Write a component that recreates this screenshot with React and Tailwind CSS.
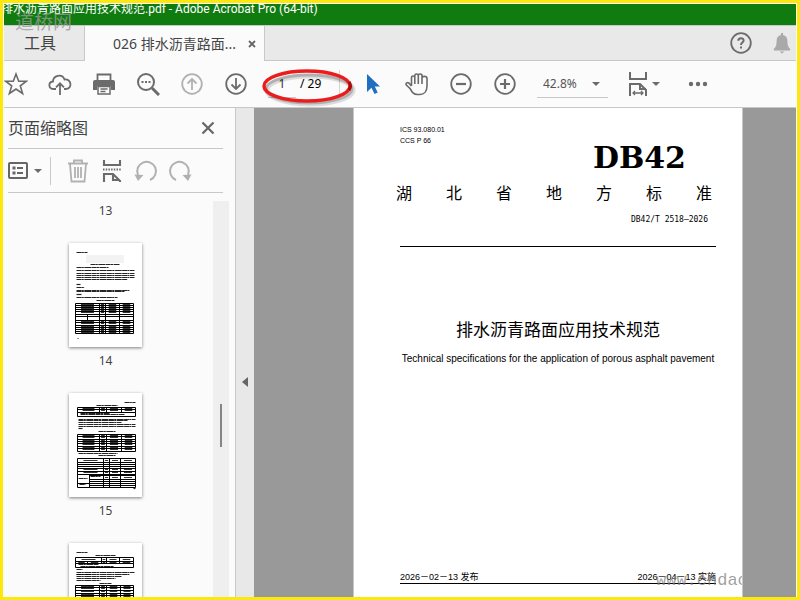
import { useState } from "react";

const sans = "font-['Noto_Sans','Noto_Sans_CJK_SC',sans-serif]";

// Small line drawings of the document pages, in page units of 73 x 104
const thumbs = [
  {
    page: 14,
    stamp: true,
    lines: [
      [7, 18, 9], [21, 50, 21], [7, 39, 24], [7, 65, 27], [7, 65, 30], [7, 65, 32],
      [7, 65, 34], [7, 58, 36], [7, 11, 41], [7, 15, 44], [7, 60, 47], [7, 55, 48],
      [7, 12, 51], [7, 48, 54], [27, 45, 57], [8, 9, 95],
    ],
    tables: [
      { x: 6, w: 58, rows: [60, 62, 64, 66, 68, 71], cols: [30, 36, 50] },
      { x: 6, w: 58, rows: [71, 73, 77], cols: [18, 30, 36, 50], plain: true },
      { x: 6, w: 58, rows: [77, 79, 82, 84, 86, 88, 90], cols: [30, 36, 50] },
    ],
  },
  {
    page: 15,
    lines: [
      [55, 66, 9], [27, 48, 12], [11, 40, 20], [11, 55, 21], [9, 66, 26], [9, 58, 27], [9, 52, 29],
      [9, 66, 31], [9, 66, 33], [9, 13, 35], [29, 46, 38], [9, 48, 60], [29, 46, 62], [9, 18, 85],
      [10, 16, 91], [21, 31, 83], [64, 66, 95],
    ],
    tables: [
      { x: 8, w: 58, rows: [14, 16, 19], cols: [30, 37, 52] },
      { x: 8, w: 58, rows: [19, 23], cols: [], plain: true },
      { x: 8, w: 58, rows: [41, 43, 46, 48, 50, 53, 55, 58], cols: [30, 37, 52] },
      { x: 8, w: 58, rows: [65, 69], cols: [34, 40, 51] },
      { x: 8, w: 58, rows: [69, 71, 73, 75], cols: [34, 40, 51], plain: true },
      { x: 8, w: 58, rows: [75, 78, 81], cols: [34, 40, 51] },
      { x: 8, w: 12, rows: [81, 90, 94], cols: [], plain: true },
      { x: 20, w: 46, rows: [81, 82], cols: [34, 40, 51], plain: true },
      { x: 34, w: 32, rows: [82, 86], cols: [40, 51] },
      { x: 20, w: 46, rows: [86, 88, 90, 92, 94], cols: [34, 40, 51], plain: true },
    ],
  },
  {
    page: 16,
    lines: [
      [7, 18, 9], [26, 46, 12], [9, 29, 21], [11, 44, 23], [7, 13, 26], [7, 65, 29],
      [7, 22, 31], [7, 60, 31], [7, 52, 33], [7, 46, 35], [7, 31, 37], [30, 42, 40],
    ],
    tables: [
      { x: 6, w: 58, rows: [14, 18], cols: [32, 37, 50] },
      { x: 6, w: 58, rows: [18, 20], cols: [18, 32, 37, 50] },
      { x: 6, w: 58, rows: [20, 24], cols: [], plain: true },
      { x: 6, w: 58, rows: [42, 44, 47, 50, 52, 54, 57, 60], cols: [30, 37, 51] },
      { x: 6, w: 58, rows: [66, 69, 72, 75, 78], cols: [30, 37, 51] },
    ],
  },
];

function TableDrawing({ x, w, rows, cols, plain }) {
  const top = rows[0];
  const bottom = rows[rows.length - 1];
  const edges = [x, ...cols, x + w];

  return (
    <g stroke="#000">
      {rows.map((y) => (
        <line key={y} x1={x} x2={x + w} y1={y} y2={y} />
      ))}
      {edges.map((c) => (
        <line key={c} x1={c} x2={c} y1={top} y2={bottom} />
      ))}
      {!plain &&
        rows.slice(1).map((y, r) =>
          edges.slice(1).map((e, i) => {
            const mid = (edges[i] + e) / 2;
            const half = (e - edges[i]) * 0.27;
            const cy = Math.floor((y + rows[r]) / 2);
            return (
              <line key={`${y}-${e}`} x1={mid - half} x2={mid + half} y1={cy} y2={cy} strokeOpacity="0.8" />
            );
          })
        )}
    </g>
  );
}

function Thumbnail({ page, stamp, lines, tables }) {
  return (
    <button className="flex flex-col items-center gap-1" aria-label={`Page ${page}`}>
      <svg viewBox="0 0 73 104" className="w-[73px] h-[104px] bg-white shadow-[0_1px_3px_rgba(0,0,0,0.5)]">
        {stamp && <rect x="17" y="12" width="38" height="8" fill="#f3f3f3" />}
        <g transform="translate(0.5 0.5)">
          {lines.map(([x1, x2, y], i) => (
            <line key={i} x1={x1} x2={x2} y1={y} y2={y} stroke="#000" strokeOpacity="0.85" strokeWidth="1.2" strokeDasharray="5 0.3 2 0.5 7 0.4" />
          ))}
          {tables.map((t, i) => (
            <TableDrawing key={i} {...t} />
          ))}
        </g>
      </svg>
      <span className="text-xs leading-5 text-[#444]">{page}</span>
    </button>
  );
}

function Icon({ label, children, className = "text-[#6b6b6b]" }) {
  return (
    <button aria-label={label} className={`shrink-0 ${className}`}>
      <svg viewBox="0 0 24 24" className="w-6 h-6" fill="none" stroke="currentColor" strokeWidth="1.8">
        {children}
      </svg>
    </button>
  );
}

function Caret() {
  return (
    <svg viewBox="0 0 8 4" className="w-2 h-1 shrink-0" fill="#6b6b6b">
      <path d="M0 0h8L4 4z" />
    </svg>
  );
}

function TabBar() {
  return (
    <nav className="flex h-9 shrink-0 bg-[#e9e9e9] text-[#444]">
      <button className="w-[81px] pr-2 border-r border-b border-t border-[#c8c8c8] text-base leading-8">工具</button>
      <div className="w-[180px] pl-7 flex items-center gap-3 bg-[#fbfbfb] border-r border-t border-[#c8c8c8]">
        <button className="text-sm whitespace-nowrap">026 排水沥青路面...</button>
        <button aria-label="Close tab">
          <svg viewBox="0 0 8 8" className="w-2 h-2" stroke="#666" strokeWidth="1.8">
            <path d="M1 1l6 6M7 1l-6 6" />
          </svg>
        </button>
      </div>
      <div className="flex-1 flex items-center justify-end gap-5 pr-[5px] border-b border-t border-[#c8c8c8]">
        <Icon label="Help">
          <circle cx="12" cy="12" r="9.8" />
          <path d="M9.3 9.8c0-3.6 5.5-3.4 5.3-.2-.1 2-2.6 1.900-2.600 4.300M12 15.400v2.200" strokeWidth="2" />
        </Icon>
        <button aria-label="Notifications" className="text-[#a9a9a9]">
          <svg viewBox="0 0 18 22" className="w-[18px] h-[22px]" fill="currentColor">
            <path d="M8 1h2v2c3 .6 4.400 2.800 4.400 6 0 4 .6 6 2.800 8v1.500H.8V17c2.200-2 2.800-4 2.800-8 0-3.200 1.400-5.400 4.400-6zM6.500 19.500h5L9 21.500z" />
          </svg>
        </button>
      </div>
    </nav>
  );
}

function Toolbar() {
  const [page, setPage] = useState("1");

  return (
    <div className="flex items-center h-[47px] shrink-0 bg-[#fbfbfb] border-b border-[#c8c8c8]">
      <div className="flex gap-5">
        <Icon label="Star">
          <path d="M12 2l2.7 7.2h7.7l-6.100 4.700 2.300 7.600L12 17l-6.600 4.500 2.300-7.600L1.600 9.200h7.700z" strokeWidth="1.6" />
        </Icon>
        <Icon label="Upload">
          <path d="M8 17H6c-6 0-6-7-1-7.500C5 3.500 14 1 16.500 7.500c7-1 8.500 9.500 1 9.500H16" />
          <path d="M12 23V11.500M8 15.300l4-4 4 4" />
        </Icon>
        <Icon label="Print">
          <path d="M5.500 8V2.500h13V8" />
          <path d="M3 8h18q2 0 2 2v8h-4v-4H5v4H1v-8q0-2 2-2z" fill="currentColor" stroke="none" />
          <path d="M6 14.500h12V22H6zM8.500 17h7M8.500 19.500h5" strokeWidth="1.5" />
        </Icon>
        <Icon label="Search">
          <circle cx="10" cy="10" r="8" strokeWidth="2" />
          <path d="M16 16l7 7" strokeWidth="3" />
          <path d="M5.500 10h2M9 10h2M12.500 10h2" strokeWidth="2" />
        </Icon>
        <Icon label="Previous page" className="text-[#b1b1b1]">
          <circle cx="12" cy="12" r="9.8" />
          <path d="M12 18V7M7.500 11.500L12 7l4.500 4.500" />
        </Icon>
        <Icon label="Next page">
          <circle cx="12" cy="12" r="9.8" />
          <path d="M12 6v11M7.500 12.500L12 17l4.500-4.500" />
        </Icon>
      </div>

      {/* Page number */}
      <div className="relative flex items-center ml-5 h-7 w-[72px] border-r border-[#d4d4d4] text-xs text-[#333]">
        <input
          aria-label="Page number"
          value={page}
          onChange={(e) => setPage(e.target.value)}
          className="w-7 h-7 border-b border-[#c8c8c8] text-center outline-none"
        />
        <span className="pl-1 text-black">/ 29</span>
        <svg viewBox="0 0 96 40" className="absolute -left-1.5 -top-0.5 w-24 h-10 max-w-none pointer-events-none" fill="none">
          <ellipse cx="48" cy="22" rx="43" ry="14" stroke="#000" strokeOpacity="0.12" strokeWidth="5" />
          <ellipse cx="47" cy="21" rx="43" ry="14" stroke="#000" strokeOpacity="0.2" strokeWidth="3" />
          <ellipse cx="45" cy="18" rx="43" ry="15" stroke="#ed1c1c" strokeWidth="3.5" />
          <path d="M87 14q3 4 0 8" stroke="#a80c0c" strokeWidth="3" />
        </svg>
      </div>

      <div className="flex gap-5 ml-[21px]">
        <Icon label="Select" className="text-[#1f6fc0]">
          <path d="M6 2v18l4.500-4.200 3 6.200 3.200-1.500-2.900-6H19z" fill="currentColor" stroke="none" />
        </Icon>
        <Icon label="Hand">
          <path
            d="M6.500 14V5.500c0-2 3.300-2 3.300 0V3.500c0-2 3.500-2 3.500 0 0-2 3.700-2 3.700 0V6c0-2 5-2.500 5 .5V14c0 5.500-3 8.500-7 8.500h-2.500c-4 0-5.500-2.500-7.500-6L1.300 13c-1-2 1.200-3 2.700-1.800L6.500 14M9.800 5v7M13.300 3.500V12M17 5.500V12"
            strokeWidth="1.6"
          />
        </Icon>
        <Icon label="Zoom out">
          <circle cx="12" cy="12" r="9.8" />
          <path d="M7 12h10" strokeWidth="2.2" />
        </Icon>
        <Icon label="Zoom in">
          <circle cx="12" cy="12" r="9.8" />
          <path d="M7 12h10M12 7v10" strokeWidth="2.2" />
        </Icon>
      </div>

      {/* Zoom level */}
      <div className="flex items-center ml-5 h-7 w-[71px] pl-1.5 pr-2 border-b border-[#c8c8c8]">
        <select aria-label="Zoom level" className="appearance-none flex-1 min-w-0 text-xs text-[#555] outline-none">
          <option>42.8%</option>
          <option>100%</option>
        </select>
        <Caret />
      </div>

      <button aria-label="Fit page" className="flex items-center gap-1 ml-5">
        <svg viewBox="0 0 20 26" className="w-5 h-[26px]" fill="none" stroke="#6b6b6b" strokeWidth="2">
          <path d="M2 1v7h16V1M2 25V13h10l6 6v6M12 13v5h6" />
          <path d="M5 22h10M7 20l-2 2 2 2M13 20l2 2-2 2" strokeWidth="1.3" />
        </svg>
        <Caret />
      </button>
      <Icon label="More tools" className="ml-[26px] text-[#6b6b6b]">
        <g fill="currentColor" stroke="none">
          <circle cx="5" cy="12" r="2.2" />
          <circle cx="12" cy="12" r="2.2" />
          <circle cx="19" cy="12" r="2.2" />
        </g>
      </Icon>
    </div>
  );
}

function Sidebar() {
  return (
    <aside className="w-[232px] shrink-0 flex flex-col pl-1 bg-[#fbfbfb] border-r border-[#c8c8c8]">
      <div className="flex items-center justify-between mr-3 h-[41px] pr-2 shrink-0 border-b border-[#c8c8c8]">
        <h2 className="text-base text-[#444]">页面缩略图</h2>
        <button aria-label="Close panel">
          <svg viewBox="0 0 14 14" className="w-[14px] h-[14px]" stroke="#666" strokeWidth="2.2">
            <path d="M1.500 1.500l11 11M12.500 1.500l-11 11" />
          </svg>
        </button>
      </div>

      <div className="flex items-center mr-3 h-11 shrink-0 border-b border-[#c8c8c8]">
        <button aria-label="Options" className="flex items-center gap-1.5 pr-2 h-7 border-r border-[#c8c8c8]">
          <svg viewBox="0 0 20 17" className="w-5 h-[17px]" fill="none" stroke="#666" strokeWidth="2">
            <rect x="1" y="1" width="18" height="15" rx="1" />
            <path d="M9 6h6M9 11h6" />
            <path d="M4.500 6h3M4.500 11h3" strokeWidth="3" />
          </svg>
          <Caret />
        </button>
        <div className="flex items-center gap-2.5 ml-[15px]">
          <Icon label="Delete" className="text-[#b1b1b1]">
            <path d="M2 4.500h20M8 4V1.500h8V4M4 5l1.500 17.500h13L20 5M9 8v11M12 8v11M15 8v11" />
          </Icon>
          <Icon label="Split pages">
            <path d="M4 1v5h16V1M4 23v-8h9l7 7v1M13 15v6h6" strokeWidth="2.1" />
            <path d="M3 10.500h18" strokeDasharray="1.5 1.2" />
          </Icon>
          <Icon label="Rotate left" className="text-[#b1b1b1]">
            <path d="M16 21A9.400 9.400 0 1 0 4 16" strokeWidth="2" />
            <path d="M.5 15.500l9 .5-5.500 6z" fill="currentColor" stroke="none" />
          </Icon>
          <Icon label="Rotate right" className="text-[#b1b1b1]">
            <path d="M8 21A9.400 9.400 0 1 1 20 16" strokeWidth="2" />
            <path d="M23.500 15.500l-9 .5 5.500 6z" fill="currentColor" stroke="none" />
          </Icon>
        </div>
      </div>

      <div className="flex flex-1 min-h-0 pt-2 pr-1.5">
        <div className="flex-1 flex flex-col items-center gap-[22px] pr-2.5 overflow-hidden">
          <span className="text-xs leading-5 text-[#444]">13</span>
          {thumbs.map((t) => (
            <Thumbnail key={t.page} {...t} />
          ))}
        </div>
        <div className="w-4 shrink-0 pt-[203px] pl-[7px] bg-[#efefef]">
          <div className="w-0.5 h-[43px] bg-[#858585]" />
        </div>
      </div>
    </aside>
  );
}

function DocumentPage() {
  return (
    <article className="relative w-[390px] ml-[99px] shrink-0 flex flex-col pl-[46px] pr-[26px] bg-white border-l border-r border-[#c8c8c8] text-black overflow-hidden">
      <p className="mt-4 font-['Liberation_Sans',sans-serif] text-[7px] leading-[11px]">
        ICS 93.080.01
        <br />
        CCS P 66
      </p>
      <div className="self-end mr-[30px] font-['DejaVu_Serif',serif] font-bold text-[30px] leading-6">DB42</div>
      <div className="flex justify-between -ml-1 mr-1 mt-2.5 text-base leading-6 font-['Noto_Sans_CJK_SC',sans-serif]">
        {["湖", "北", "省", "地", "方", "标", "准"].map((c) => (
          <span key={c}>{c}</span>
        ))}
      </div>
      <p className="self-end mr-2 mt-2.5 font-['DejaVu_Sans_Mono',monospace] text-[8px] leading-3">DB42/T 2518—2026</p>
      <hr className="mt-5 border-black" />
      <h1 className="mt-[70px] text-center text-[17px] leading-6 font-['Noto_Sans_CJK_SC',sans-serif]">排水沥青路面应用技术规范</h1>
      <p className="mt-3 text-center whitespace-nowrap font-['Liberation_Sans',sans-serif] text-[10px] leading-3">
        Technical specifications for the application of porous asphalt pavement
      </p>
      <footer className="mt-auto mb-[13px] flex justify-between border-b border-black text-[9px] leading-3 font-['Liberation_Sans','Noto_Sans_CJK_SC',sans-serif]">
        <span>2026－02－13 发布</span>
        <span>2026－04－13 实施</span>
      </footer>
      <span className="absolute left-[302px] bottom-1 font-['Liberation_Mono',monospace] text-[17px] leading-6 text-[#777]/70">
        www.cndao
      </span>
    </article>
  );
}

export default function App() {
  return (
    <div className={`relative h-screen flex flex-col overflow-hidden border-[3px] border-[#fde80c] bg-white ${sans}`}>
      <div className="flex flex-col flex-1 min-h-0 mt-px mx-px">
        <header className="h-[21px] shrink-0 bg-[#107c10] text-white text-xs leading-[10px] -indent-[3px] whitespace-nowrap overflow-hidden font-['Roboto','Noto_Sans_CJK_SC',sans-serif]">
          排水沥青路面应用技术规范.pdf - Adobe Acrobat Pro (64-bit)
        </header>
        <TabBar />
        <Toolbar />
        <div className="flex flex-1 min-h-0">
          <Sidebar />
          <button aria-label="Collapse panel" className="w-[18px] shrink-0 flex items-center justify-center bg-[#e8e8e8]">
            <svg viewBox="0 0 6 10" className="w-1.5 h-2.5 mb-[-58px]" fill="#666">
              <path d="M6 0v10L0 5z" />
            </svg>
          </button>
          <main className="flex-1 min-w-0 flex bg-[#999]">
            <DocumentPage />
          </main>
        </div>
      </div>
      <span className="absolute left-3 top-1.5 text-[19px] leading-6 text-[#999]/80 font-['Noto_Sans_CJK_SC',sans-serif]">
        道桥网
      </span>
    </div>
  );
}
